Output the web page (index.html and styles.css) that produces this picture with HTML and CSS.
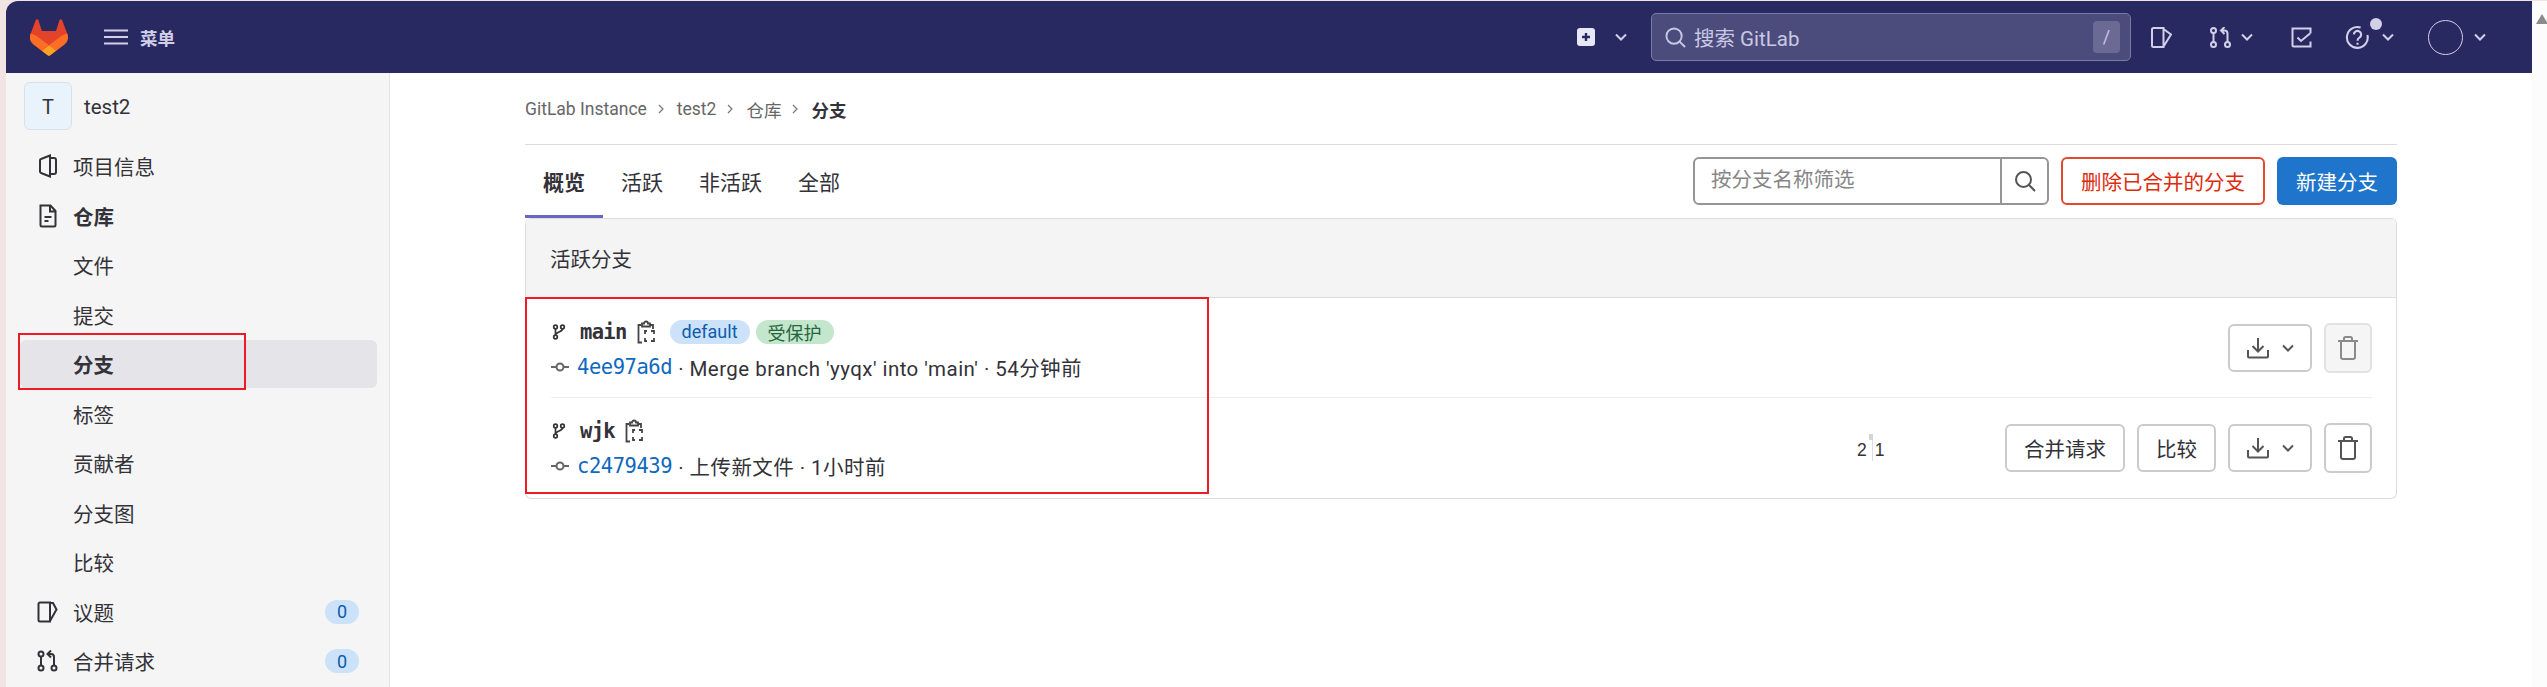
FILE: index.html
```html
<!DOCTYPE html>
<html lang="zh">
<head>
<meta charset="utf-8">
<title>分支 · test2</title>
<link rel="stylesheet" href="styles.css">
</head>
<body>
<div class="app">
  <header class="nav">
    <svg class="logo" viewBox="0 0 25 24"><path d="m24.507 9.5-.034-.09L21.082.562a.896.896 0 0 0-1.694.091l-2.29 7.01H7.825L5.535.653a.898.898 0 0 0-1.694-.09L.451 9.411.416 9.5a6.297 6.297 0 0 0 2.09 7.278l.012.01.03.022 5.16 3.867 2.56 1.935 1.554 1.176a1.051 1.051 0 0 0 1.268 0l1.555-1.176 2.56-1.935 5.197-3.89.014-.01A6.297 6.297 0 0 0 24.507 9.5Z" fill="#E24329"/><path d="m24.507 9.5-.034-.09a11.44 11.44 0 0 0-4.56 2.051l-7.447 5.632 4.742 3.584 5.197-3.89.014-.01A6.297 6.297 0 0 0 24.507 9.5Z" fill="#FC6D26"/><path d="m7.707 20.677 2.56 1.935 1.555 1.176a1.051 1.051 0 0 0 1.268 0l1.555-1.176 2.56-1.935-4.743-3.584-4.755 3.584Z" fill="#FCA326"/><path d="M5.01 11.461a11.43 11.43 0 0 0-4.56-2.05L.416 9.5a6.297 6.297 0 0 0 2.09 7.278l.012.01.03.022 5.16 3.867 4.745-3.584-7.444-5.632Z" fill="#FC6D26"/></svg>
    <svg class="burger" viewBox="0 0 24 16"><path d="M0 1.500h24M0 8h24M0 14.500h24" stroke="currentColor" stroke-width="2" fill="none"/></svg>
    <span class="menu-label">菜单</span>
    <div class="nav-right">
      <svg class="nav-plus" viewBox="0 0 18 18"><rect width="18" height="18" rx="3" fill="currentColor"/><path d="M9 5v8M5 9h8" stroke="#292961" stroke-width="2.400"/></svg>
      <svg class="chev chev-plus" viewBox="0 0 12 8"><path d="M1 1.500l5 5 5-5" stroke="currentColor" stroke-width="2" fill="none"/></svg>
      <div class="search">
        <svg class="search-ico" viewBox="0 0 22 22"><circle cx="9.500" cy="9.500" r="8" stroke="currentColor" stroke-width="2" fill="none"/><path d="M15 15l6 6" stroke="currentColor" stroke-width="2"/></svg>
        <span class="search-text">搜索 GitLab</span>
        <kbd class="slash">/</kbd>
      </div>
      <svg class="nav-issue" viewBox="0 0 21 21"><path d="M2.500 1h10v19h-10A1.500 1.500 0 0 1 1 18.500v-16A1.500 1.500 0 0 1 2.500 1zM12.500 2l7.500 5.500-7.500 12" stroke="currentColor" stroke-width="2" fill="none"/></svg>
      <svg class="nav-mr" viewBox="0 0 21 21"><g stroke="currentColor" stroke-width="2" fill="none"><circle cx="3.500" cy="3.500" r="2.500"/><circle cx="3.500" cy="17.500" r="2.500"/><circle cx="17.500" cy="17.500" r="2.500"/><path d="M3.500 6v9M17.500 15V6.500a3 3 0 0 0-3-3h-3M14.500 0L11 3.500 14.500 7"/></g></svg>
      <svg class="chev chev-mr" viewBox="0 0 12 8"><path d="M1 1.500l5 5 5-5" stroke="currentColor" stroke-width="2" fill="none"/></svg>
      <svg class="nav-todo" viewBox="0 0 21 21"><path d="M19.500 6.500V1.500h-18v17a1 1 0 0 0 1 1h17v-5M6.500 10.500l3.500 3.500 9-7.500" stroke="currentColor" stroke-width="2" fill="none"/></svg>
      <span class="nav-help">
        <svg class="help-ico" viewBox="0 0 24 24"><path d="M15 2.500a10 10 0 1 0 6.500 7" stroke="currentColor" stroke-width="2" fill="none"/><path d="M8.500 9a3.500 3.500 0 1 1 5.500 3c-1.500 1-2 1.500-2 3M12 17v2" stroke="currentColor" stroke-width="2" fill="none"/></svg>
        <i class="help-dot"></i>
      </span>
      <svg class="chev chev-help" viewBox="0 0 12 8"><path d="M1 1.500l5 5 5-5" stroke="currentColor" stroke-width="2" fill="none"/></svg>
      <i class="avatar"></i>
      <svg class="chev chev-avatar" viewBox="0 0 12 8"><path d="M1 1.500l5 5 5-5" stroke="currentColor" stroke-width="2" fill="none"/></svg>
    </div>
  </header>

  <div class="main">
    <aside class="side">
      <div class="proj"><span class="proj-av">T</span><span class="proj-name">test2</span></div>
      <ul class="side-list">
        <li class="side-item"><svg class="side-ico" viewBox="0 0 18 24"><path d="M11 1.500L2 5a1.500 1.500 0 0 0-1 1.500v11a1.500 1.500 0 0 0 1 1.500l9 3.500zM11 4h4a2 2 0 0 1 2 2v12a2 2 0 0 1-2 2h-4" stroke="#333238" stroke-width="2" fill="none"/></svg>项目信息</li>
        <li class="side-item bold"><svg class="side-ico" viewBox="0 0 18 24"><path d="M1.500 1.500h10l5 5.500v14a1.500 1.500 0 0 1-1.500 1.500H3a1.500 1.500 0 0 1-1.500-1.500zM11 2v5.500h5.500M5.500 13h7M5.500 17h4" stroke="#333238" stroke-width="2" fill="none"/></svg>仓库</li>
        <li class="side-item">文件</li>
        <li class="side-item">提交</li>
        <li class="side-item active">分支</li>
        <li class="side-item">标签</li>
        <li class="side-item">贡献者</li>
        <li class="side-item">分支图</li>
        <li class="side-item">比较</li>
        <li class="side-item"><svg class="side-ico wide" viewBox="0 0 21 22"><path d="M3 1.500h10v19H3a1.500 1.500 0 0 1-1.500-1.500V3A1.500 1.500 0 0 1 3 1.500zM13 2h3l3.500 6.500L13 20" stroke="#333238" stroke-width="2" fill="none"/></svg>议题<span class="count">0</span></li>
        <li class="side-item"><svg class="side-ico wide" viewBox="0 0 21 22"><g stroke="#333238" stroke-width="2" fill="none"><circle cx="4" cy="4" r="2.500"/><circle cx="4" cy="18" r="2.500"/><circle cx="17" cy="18" r="2.500"/><path d="M4 6.500v9M17 15.500V7a3 3 0 0 0-3-3h-2.500M14 .5L10.500 4 14 7.500"/></g></svg>合并请求<span class="count">0</span></li>
      </ul>
    </aside>

    <main class="content">
      <nav class="crumbs">
        <span>GitLab Instance</span><svg class="crumb-sep" viewBox="0 0 6 10"><path d="M1 1l4 4-4 4" stroke="#777" stroke-width="1.200" fill="none"/></svg>
        <span>test2</span><svg class="crumb-sep" viewBox="0 0 6 10"><path d="M1 1l4 4-4 4" stroke="#777" stroke-width="1.200" fill="none"/></svg>
        <span>仓库</span><svg class="crumb-sep" viewBox="0 0 6 10"><path d="M1 1l4 4-4 4" stroke="#777" stroke-width="1.200" fill="none"/></svg>
        <strong class="crumb-cur">分支</strong>
      </nav>
      <div class="tabbar">
        <ul class="tabs">
          <li class="tab on">概览</li>
          <li class="tab">活跃</li>
          <li class="tab">非活跃</li>
          <li class="tab">全部</li>
        </ul>
        <div class="tools">
          <div class="filter">
            <span class="filter-text">按分支名称筛选</span>
            <span class="filter-btn"><svg class="filter-ico" viewBox="0 0 22 22"><circle cx="9.500" cy="9.500" r="7.500" stroke="#555" stroke-width="2" fill="none"/><path d="M15 15l6 6" stroke="#555" stroke-width="2"/></svg></span>
          </div>
          <span class="btn-danger">删除已合并的分支</span>
          <span class="btn-primary">新建分支</span>
        </div>
      </div>
      <section class="card">
        <div class="card-head">活跃分支</div>
        <div class="rows">
          <div class="row">
            <div class="info">
              <div class="line-1">
                <svg class="branch-ico" viewBox="0 0 16 16"><g stroke="#333" stroke-width="1.700" fill="none"><circle cx="4.500" cy="3" r="1.800"/><circle cx="4.500" cy="13" r="1.800"/><circle cx="11.500" cy="3" r="1.800"/><path d="M4.500 5v6M11.500 5c0 3-7 3-7 6"/></g></svg>
                <span class="ref">main</span>
                <svg class="clip" viewBox="0 0 18 24"><g stroke="#444" stroke-width="1.800" fill="none"><path d="M4 5H1.500v17.500H5M5 6.500V3.500h2a2 2 0 0 1 4 0h2v3zM13.500 5H16v4"/><path d="M8 14v-3h2M14 11h3v3M17 18v3h-3M10 21H8v-3"/></g></svg>
                <span class="tag tag-blue">default</span>
                <span class="tag tag-green">受保护</span>
              </div>
              <div class="line-2">
                <svg class="commit-ico" viewBox="0 0 18 10"><circle cx="9" cy="5" r="3.500" stroke="#666" stroke-width="2" fill="none"/><path d="M0 5h5M13 5h5" stroke="#666" stroke-width="2"/></svg>
                <a class="sha">4ee97a6d</a><span class="msg">· Merge branch 'yyqx' into 'main' · 54分钟前</span>
              </div>
            </div>
            <div class="acts">
              <span class="dl"><svg class="dl-ico" viewBox="0 0 22 22"><path d="M11 1v13M5.500 9l5.500 5.500L16.500 9M1 13v6.500a1 1 0 0 0 1 1h18a1 1 0 0 0 1-1V13" stroke="#555" stroke-width="2" fill="none"/></svg><svg class="dl-chev" viewBox="0 0 12 8"><path d="M1 1.500l5 5 5-5" stroke="#555" stroke-width="2" fill="none"/></svg></span>
              <span class="trash off"><svg class="trash-ico" viewBox="0 0 20 24"><path d="M0 5h20M6 5V2.500A1.500 1.500 0 0 1 7.500 1h5A1.500 1.500 0 0 1 14 2.500V5M3 5v16a2 2 0 0 0 2 2h10a2 2 0 0 0 2-2V5" stroke="#8a8a8a" stroke-width="2" fill="none"/></svg></span>
            </div>
          </div>
          <div class="row">
            <div class="info">
              <div class="line-1">
                <svg class="branch-ico" viewBox="0 0 16 16"><g stroke="#333" stroke-width="1.700" fill="none"><circle cx="4.500" cy="3" r="1.800"/><circle cx="4.500" cy="13" r="1.800"/><circle cx="11.500" cy="3" r="1.800"/><path d="M4.500 5v6M11.500 5c0 3-7 3-7 6"/></g></svg>
                <span class="ref">wjk</span>
                <svg class="clip" viewBox="0 0 18 24"><g stroke="#444" stroke-width="1.800" fill="none"><path d="M4 5H1.500v17.500H5M5 6.500V3.500h2a2 2 0 0 1 4 0h2v3zM13.500 5H16v4"/><path d="M8 14v-3h2M14 11h3v3M17 18v3h-3M10 21H8v-3"/></g></svg>
              </div>
              <div class="line-2">
                <svg class="commit-ico" viewBox="0 0 18 10"><circle cx="9" cy="5" r="3.500" stroke="#666" stroke-width="2" fill="none"/><path d="M0 5h5M13 5h5" stroke="#666" stroke-width="2"/></svg>
                <a class="sha">c2479439</a><span class="msg">· 上传新文件 · 1小时前</span>
              </div>
            </div>
            <div class="diverge"><span class="behind">2</span><i class="div-line"></i><span class="ahead">1</span></div>
            <div class="acts">
              <span class="plain">合并请求</span>
              <span class="plain">比较</span>
              <span class="dl"><svg class="dl-ico" viewBox="0 0 22 22"><path d="M11 1v13M5.500 9l5.500 5.500L16.500 9M1 13v6.500a1 1 0 0 0 1 1h18a1 1 0 0 0 1-1V13" stroke="#555" stroke-width="2" fill="none"/></svg><svg class="dl-chev" viewBox="0 0 12 8"><path d="M1 1.500l5 5 5-5" stroke="#555" stroke-width="2" fill="none"/></svg></span>
              <span class="trash"><svg class="trash-ico" viewBox="0 0 20 24"><path d="M0 5h20M6 5V2.500A1.500 1.500 0 0 1 7.500 1h5A1.500 1.500 0 0 1 14 2.500V5M3 5v16a2 2 0 0 0 2 2h10a2 2 0 0 0 2-2V5" stroke="#555" stroke-width="2" fill="none"/></svg></span>
            </div>
          </div>
        </div>
      </section>
    </main>
  </div>
</div>
<div class="scroll-strip"><i class="scroll-up"></i></div>
<i class="mark mark-side"></i>
<i class="mark mark-rows"></i>
</body>
</html>
```

FILE: styles.css
```css
* { box-sizing: border-box; }
html, body { margin: 0; height: 100%; overflow: hidden; }
body {
  background: #f3e4e4;
  font-family: "Roboto", "Noto Sans CJK SC", sans-serif;
  font-size: 20.5px;
  color: #333238;
  position: relative;
}
ul { list-style: none; margin: 0; padding: 0; }
svg { display: block; flex: none; }

.app {
  margin: 1px 15px 0 6px;
  height: 686px;
  display: flex;
  flex-direction: column;
  background: #fff;
  border-top-left-radius: 12px;
  overflow: hidden;
}
.scroll-strip {
  position: absolute;
  top: 1px;
  right: 0;
  bottom: 0;
  width: 15px;
  background: #fcfcfc;
}
.scroll-up {
  position: absolute;
  top: 13px;
  left: 4px;
  border-left: 6px solid transparent;
  border-right: 6px solid transparent;
  border-bottom: 10px solid #8b8b8b;
}

/* top bar */
.nav {
  height: 72px;
  flex: none;
  background: #292961;
  color: #d1d0e8;
  display: flex;
  align-items: center;
  padding-left: 24px;
}
.logo { width: 38px; height: 37px; }
.burger { width: 24px; height: 16px; margin-left: 36px; }
.menu-label { margin-left: 12px; font-size: 17.5px; font-weight: 700; }
.nav-right { margin-left: auto; display: flex; align-items: center; }
.nav-plus { width: 18px; height: 18px; color: #e7e7f5; }
.chev { width: 12px; height: 8px; }
.chev-plus { margin-left: 20px; }
.search {
  width: 480px;
  height: 48px;
  margin-left: 24px;
  display: flex;
  align-items: center;
  padding: 0 10px 0 13px;
  background: #4c4c7c;
  border: 1px solid #7a7aa3;
  border-radius: 5px;
  color: #c8c8e4;
}
.search-ico { width: 21px; height: 21px; }
.search-text { margin-left: 8px; font-size: 20.5px; }
.slash {
  margin-left: auto;
  width: 27px;
  height: 32px;
  background: #6a6a95;
  border-radius: 4px;
  font: 18px "Roboto", sans-serif;
  text-align: center;
  line-height: 32px;
}
.nav-issue { width: 21px; height: 21px; margin-left: 20px; }
.nav-mr { width: 21px; height: 21px; margin-left: 38px; }
.chev-mr { margin-left: 10px; }
.nav-todo { width: 21px; height: 21px; margin-left: 38px; }
.nav-help { position: relative; margin-left: 33px; }
.help-ico { width: 25px; height: 25px; }
.help-dot {
  position: absolute;
  top: -7px;
  right: -12px;
  width: 12px;
  height: 12px;
  border-radius: 50%;
  background: #d1d0e8;
}
.chev-help { margin-left: 12px; }
.avatar {
  width: 35px;
  height: 35px;
  margin-left: 34px;
  border: 1px solid #d1d0e8;
  border-radius: 50%;
}
.chev-avatar { margin: 0 46px 0 11px; }

/* layout */
.main { flex: 1; display: flex; min-height: 0; }
.side {
  width: 384px;
  flex: none;
  background: #f5f5f5;
  border-right: 1px solid #e4e4e4;
  padding: 9px 12px 0 14px;
}
.proj { display: flex; align-items: center; padding-left: 4px; height: 48px; }
.proj-av {
  width: 48px;
  height: 48px;
  padding-top: 2px;
  background: #e9f3fc;
  border: 1px solid #d5e2ee;
  border-radius: 6px;
  display: flex;
  align-items: center;
  justify-content: center;
  font-size: 20px;
}
.proj-name { margin-left: 12px; padding-top: 2px; }
.side-list { margin-top: 12px; }
.side-item {
  height: 48px;
  margin-bottom: 1.5px;
  padding: 0 18px 0 53px;
  border-radius: 6px;
  display: flex;
  align-items: center;
  position: relative;
}
.side-item.bold, .side-item.active { font-weight: 700; }
.side-item.active { background: #e5e4e9; }
.side-ico { position: absolute; left: 19px; top: 12px; width: 18px; height: 24px; }
.side-ico.wide { left: 17px; top: 13px; width: 21px; height: 22px; }
.count {
  margin-left: auto;
  width: 34px;
  height: 24px;
  border-radius: 12px;
  background: #cbe2f9;
  color: #0b5cad;
  font-size: 18px;
  display: flex;
  align-items: center;
  justify-content: center;
}

/* content */
.content { flex: 1; min-width: 0; padding: 0 135px 0 135px; }
.crumbs {
  height: 72px;
  display: flex;
  align-items: center;
  padding-top: 1px;
  border-bottom: 1px solid #dcdcde;
  font-size: 17.5px;
  color: #666;
}
.crumb-sep { width: 6px; height: 10px; margin: 0 13px 0 11px; }
.crumb-cur { color: #333238; }
.tabbar { display: flex; align-items: flex-start; height: 73px; }
.tabs { display: flex; height: 73px; font-size: 21px; }
.tab { padding: 1px 18px 0; height: 73px; display: flex; align-items: center; border-bottom: 3px solid transparent; }
.tab.on { font-weight: 700; border-bottom-color: #6666c4; }
.tools { margin-left: auto; display: flex; gap: 12px; padding-top: 12px; }
.filter {
  width: 356px;
  height: 48px;
  display: flex;
  border: 2px solid #969699;
  border-radius: 6px;
}
.filter-text { flex: 1; padding-left: 16px; line-height: 42px; color: #868686; }
.filter-btn {
  width: 47px;
  border-left: 2px solid #969699;
  display: flex;
  align-items: center;
  justify-content: center;
}
.filter-ico { width: 22px; height: 22px; }
.btn-danger, .btn-primary {
  height: 48px;
  display: flex;
  align-items: center;
  justify-content: center;
  border-radius: 6px;
}
.btn-danger { width: 204px; border: 2px solid #e2492f; color: #dd2b0e; }
.btn-primary { width: 120px; background: #1f75cb; color: #fff; }

/* card */
.card {
  border: 1px solid #dcdcde;
  border-radius: 6px;
  height: 281px;
  overflow: hidden;
  border-top: 0;
}
.card-head {
  height: 80px;
  background: #f4f4f4;
  border-top: 1px solid #dcdcde;
  border-bottom: 1px solid #dcdcde;
  padding-left: 24px;
  display: flex;
  align-items: center;
}
.rows { padding: 0 24px 0 25px; }
.row {
  height: 100px;
  display: flex;
  align-items: center;
  position: relative;
  border-bottom: 1px solid #ececef;
}
.row:last-child { border-bottom: 0; }
.info { display: flex; flex-direction: column; gap: 9px; padding-top: 1px; }
.row:first-child .info { padding-top: 3px; }
.line-1 { display: flex; align-items: center; height: 26px; }
.line-2 { display: flex; align-items: center; height: 26px; }
.branch-ico { width: 16px; height: 16px; }
.ref { margin-left: 13px; font: 700 20.5px "DejaVu Sans Mono", monospace; letter-spacing: -.7px; }
.clip { width: 18px; height: 24px; margin-left: 10px; }
.tag {
  height: 24px;
  border-radius: 12px;
  display: flex;
  align-items: center;
  justify-content: center;
  font-size: 18px;
}
.tag-blue { width: 80px; margin-left: 15px; background: #cbe2f9; color: #0b5cad; }
.tag-green { width: 78px; margin-left: 6px; background: #c3e6cd; color: #24663b; }
.commit-ico { width: 18px; height: 10px; }
.sha { margin-left: 8px; font: 20.5px "DejaVu Sans Mono", monospace; letter-spacing: -.45px; color: #1068bf; }
.msg { margin-left: 6px; font-size: 20.5px; letter-spacing: .45px; }
.acts { margin-left: auto; display: flex; gap: 12px; align-items: center; }
.plain, .dl, .trash {
  height: 48px;
  display: flex;
  align-items: center;
  justify-content: center;
  border: 2px solid #cbcbce;
  border-radius: 6px;
}
.plain { padding: 0 17px; }
.dl { width: 84px; gap: 13px; }
.dl-ico { width: 22px; height: 22px; }
.dl-chev { width: 12px; height: 8px; }
.trash { width: 48px; height: 50px; }
.trash.off { background: #f5f5f5; border-color: #e2e2e4; }
.trash-ico { width: 20px; height: 24px; }
.diverge {
  position: absolute;
  left: 1306px;
  top: 36px;
  display: flex;
  align-items: flex-end;
  height: 27px;
  line-height: 22px;
  font: 17.5px "Liberation Sans", sans-serif;
}
.div-line { width: 1px; height: 27px; margin: 0 2px 0 5px; background: #dcdcde; position: relative; }
.div-line::before {
  content: "";
  position: absolute;
  left: -3px;
  top: 0;
  width: 4px;
  height: 6px;
  background: #d5d5d5;
}

/* annotations drawn over the page */
.mark { position: absolute; border: 2px solid #ed1c24; pointer-events: none; }
.mark-side { left: 18px; top: 333px; width: 228px; height: 57px; }
.mark-rows { left: 525px; top: 297px; width: 684px; height: 197px; }
```
